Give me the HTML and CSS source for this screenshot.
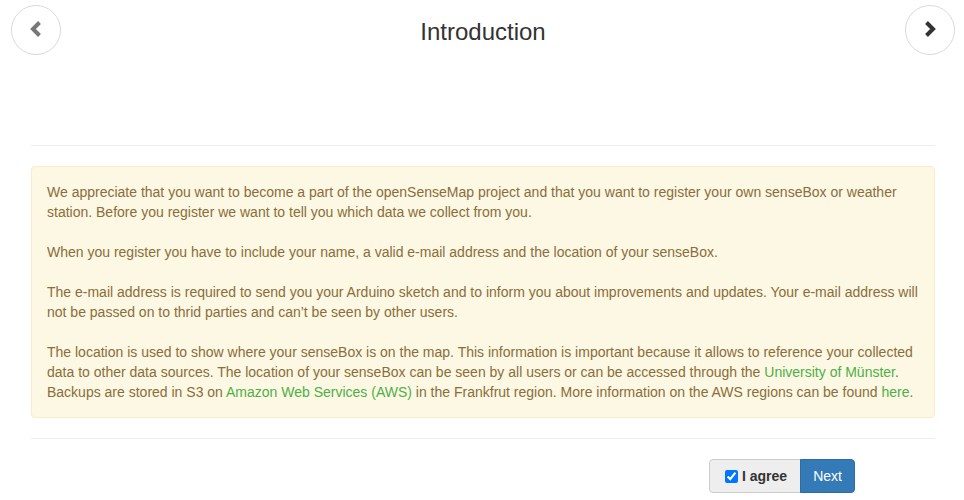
FILE: index.html
```html
<!DOCTYPE html>
<html lang="en">
<head>
  <meta charset="UTF-8" />
  <meta name="viewport" content="width=device-width, initial-scale=1" />
  <title>Introduction</title>
  <link rel="stylesheet" href="styles.css">
</head>
<body>
  <div class="wizard-header">
    <button class="nav-circle">
      <svg width="16" height="18" viewBox="0 0 16 18"><polyline points="11.5,2.5 5,9 11.5,15.5" fill="none" stroke="#777" stroke-width="4" stroke-linejoin="miter"/></svg>
    </button>
    <h2 class="wizard-title">Introduction</h2>
    <button class="nav-circle">
      <svg width="16" height="18" viewBox="0 0 16 18"><polyline points="4.5,2.5 11,9 4.5,15.5" fill="none" stroke="#333" stroke-width="4" stroke-linejoin="miter"/></svg>
    </button>
  </div>

  <div class="wizard-body">
    <hr>
    <div class="alert-warning">
      <p>We appreciate that you want to become a part of the openSenseMap project and that you want to register your own senseBox or weather station. Before you register we want to tell you which data we collect from you.</p>
      <p>When you register you have to include your name, a valid e-mail address and the location of your senseBox.</p>
      <p>The e-mail address is required to send you your Arduino sketch and to inform you about improvements and updates. Your e-mail address will not be passed on to thrid parties and can’t be seen by other users.</p>
      <p>The location is used to show where your senseBox is on the map. This information is important because it allows to reference your collected data to other data sources. The location of your senseBox can be seen by all users or can be accessed through the <a href="#">University of Münster</a>. Backups are stored in S3 on <a href="#">Amazon Web Services (AWS)</a> in the Frankfrut region. More information on the AWS regions can be found <a href="#">here</a>.</p>
    </div>
    <hr>
    <div class="wizard-footer">
      <div class="btn-group">
        <label class="btn btn-default"><input type="checkbox" checked> I agree</label>
        <button class="btn btn-primary">Next</button>
      </div>
    </div>
  </div>
</body>
</html>
```

FILE: styles.css
```css
body {
  margin: 0;
  font-family: "Liberation Sans", Arial, sans-serif;
  font-size: 14px;
  line-height: 20px;
  color: #333;
  background-color: #fff;
}
.wizard-header {
  display: flex;
  justify-content: space-between;
  align-items: flex-start;
  padding: 5px 9px 0 11px;
  height: 120px;
}
.nav-circle {
  width: 50px;
  height: 50px;
  border-radius: 50%;
  border: 1px solid #d9d9d9;
  background-color: #fff;
  display: flex;
  align-items: center;
  justify-content: center;
  padding: 0 0 2px;
  cursor: pointer;
}
.wizard-title {
  margin: 10px 0 0;
  font-size: 24px;
  font-weight: normal;
  line-height: 34px;
  color: #333;
}
.wizard-body {
  margin: 0 29px 0 31px;
}
hr {
  margin: 20px 0;
  border: 0;
  border-top: 1px solid #eee;
}
.alert-warning {
  background-color: #fcf8e3;
  border: 1px solid #faebcc;
  border-radius: 4px;
  color: #8a6d3b;
  padding: 15px;
}
.alert-warning p {
  margin: 0 0 20px;
}
.alert-warning p:last-child {
  margin-bottom: 0;
}
.alert-warning a {
  color: #4eaf47;
  text-decoration: none;
}
.wizard-footer {
  display: flex;
  padding-left: 678px;
}
.btn-group {
  display: flex;
}
.btn {
  font-family: "Liberation Sans", Arial, sans-serif;
  font-size: 14px;
  line-height: 20px;
  padding: 6px 12px;
  border: 1px solid transparent;
  cursor: pointer;
  margin: 0;
}
.btn-default {
  display: flex;
  align-items: center;
  gap: 4px;
  background-color: #eee;
  border-color: #ccc;
  color: #333;
  font-weight: bold;
  border-radius: 4px 0 0 4px;
  padding: 6px 13px 6px 15px;
}
.btn-default input {
  margin: 0;
  width: 13px;
  height: 13px;
}
.btn-primary {
  background-color: #337ab7;
  border-color: #2e6da4;
  color: #fff;
  border-radius: 0 4px 4px 0;
  margin-left: -1px;
}
```
